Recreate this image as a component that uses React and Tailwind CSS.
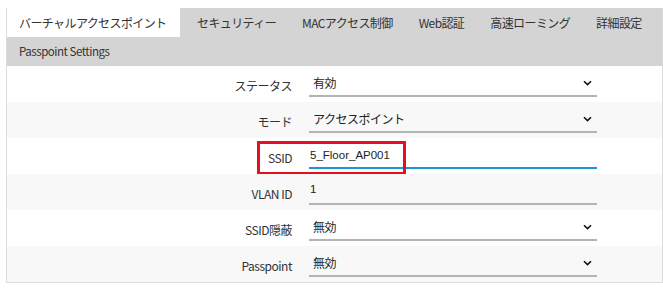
import React from 'react';

const tabs = ['セキュリティー', 'MACアクセス制御', 'Web認証', '高速ローミング', '詳細設定'];

const rows = [
  { label: 'ステータス', value: '有効', type: 'select' },
  { label: 'モード', value: 'アクセスポイント', type: 'select' },
  { label: 'SSID', value: '5_Floor_AP001', type: 'text', focused: true, marked: true },
  { label: 'VLAN ID', value: '1', type: 'text' },
  { label: 'SSID隠蔽', value: '無効', type: 'select' },
  { label: 'Passpoint', value: '無効', type: 'select' },
];

const Chevron = () => (
  <svg width="9" height="6" viewBox="0 0 9 6" className="shrink-0">
    <path d="M1 1.2 L4.5 4.6 L8 1.2" fill="none" stroke="#111" strokeWidth="1.6" />
  </svg>
);

const Field = ({ row }) => {
  const line = row.focused ? 'border-[#1a96d4]' : 'border-[#b3b3b3]';
  return (
    <div className={`flex h-[26px] w-[288px] items-center border-b-2 ${line}`}>
      {row.type === 'select' ? (
        <div className="flex w-full items-center justify-between pl-[4px] pr-[5px] pb-[1px]">
          <span className="text-[12px] tracking-[-0.04em] text-[#222]">{row.value}</span>
          <Chevron />
        </div>
      ) : (
        <span
          className={`pl-[1px] font-['Liberation_Sans','Noto_Sans_CJK_JP',sans-serif] text-[11.5px] text-[#222] ${
            row.focused ? 'pt-[1px]' : 'pb-[3px]'
          }`}
        >
          {row.value}
        </span>
      )}
    </div>
  );
};

export default function App() {
  return (
    <div className="h-[290px] w-[663px] bg-white pt-[8px] pl-[6px] font-['Noto_Sans_CJK_JP','Noto_Sans',sans-serif] text-[#333]">
      <div className="relative w-[657px] border-x border-b border-[#dcdcdc]">
        {/* tab strip */}
        <div className="flex h-[29px] items-center bg-[#d4d4d4]">
          <div className="flex h-full w-[173px] items-center bg-white pl-[12px] text-[12px] tracking-[-0.05em]">
            バーチャルアクセスポイント
          </div>
          <div className="flex items-center gap-[26px] pl-[17px] text-[12px] tracking-[-0.05em]">
            {tabs.map((t) => (
              <span key={t} className="whitespace-nowrap">{t}</span>
            ))}
          </div>
        </div>
        <div className="flex h-[29px] items-center bg-[#d4d4d4] pl-[12px] text-[11.5px] tracking-[-0.04em]">
          Passpoint Settings
        </div>

        {/* form rows */}
        {rows.map((row, i) => (
          <div
            key={row.label}
            className={`relative flex h-[36px] items-center ${i % 2 === 1 ? 'bg-[#f8f8f8]' : 'bg-white'}`}
          >
            <div className="w-[285px] pt-[3px] text-right text-[12px] tracking-[-0.04em]">{row.label}</div>
            <div className="ml-[17px]">
              <Field row={row} />
            </div>
            {row.marked && (
              <div className="absolute left-[250px] top-[3px] h-[34px] w-[149px] border-[3px] border-[#e60f1e]" />
            )}
          </div>
        ))}
      </div>
    </div>
  );
}
